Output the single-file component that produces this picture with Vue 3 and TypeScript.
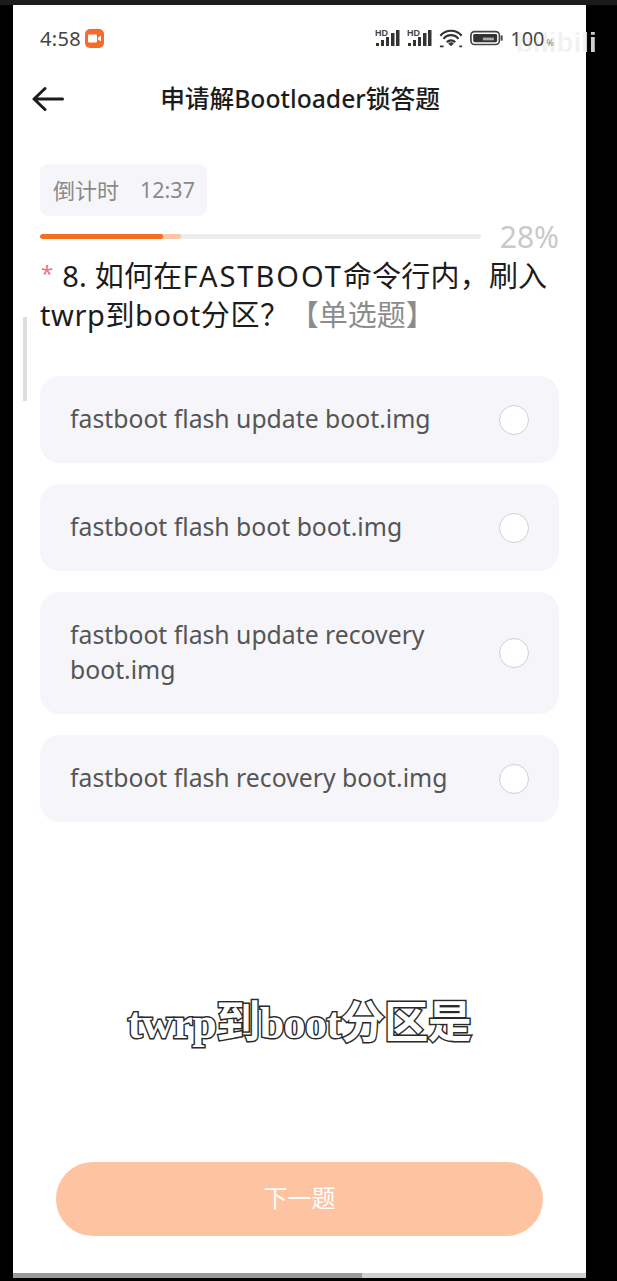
<script setup lang="ts">
const options: string[] = [
  'fastboot flash update boot.img',
  'fastboot flash boot boot.img',
  'fastboot flash update recovery boot.img',
  'fastboot flash recovery boot.img',
]
</script>

<template>
  <div class="screen">
    <div class="topline"></div>
    <div class="phone">
      <div class="status">
        <div class="status-left">
          <span class="time">4:58</span>
          <span class="rec">
            <svg width="15" height="11" viewBox="0 0 15 11"><rect x="1" y="1.5" width="9" height="8" rx="1" fill="#fff"/><path d="M11 4.5 14 2.8v5.4L11 6.5z" fill="#fff"/></svg>
          </span>
        </div>
        <div class="status-right">
          <svg class="sig" width="28" height="20" viewBox="0 0 28 20">
            <text x="0" y="7.5" class="hd">HD</text>
            <rect x="1" y="15" width="3" height="3" fill="#333"/><rect x="6" y="12" width="3" height="6" fill="#333"/><rect x="11" y="9" width="3" height="9" fill="#333"/><rect x="16" y="5" width="3.5" height="13" fill="#333"/><rect x="21" y="2" width="3.5" height="16" fill="#333"/>
          </svg>
          <svg class="sig" width="28" height="20" viewBox="0 0 28 20">
            <text x="0" y="7.5" class="hd">HD</text>
            <rect x="1" y="15" width="3" height="3" fill="#333"/><rect x="6" y="12" width="3" height="6" fill="#333"/><rect x="11" y="9" width="3" height="9" fill="#333"/><rect x="16" y="5" width="3.5" height="13" fill="#333"/><rect x="21" y="2" width="3.5" height="16" fill="#333"/>
          </svg>
          <svg class="wifi" width="24" height="20" viewBox="0 0 26 20" fill="none" stroke="#333" stroke-width="2.4">
            <path d="M1.5 7.5a15 15 0 0 1 23 0"/><path d="M5 11a10 10 0 0 1 16 0"/><path d="M8.500 14.500a6 6 0 0 1 9 0"/>
            <path d="M13 19l-3-3a4 4 0 0 1 6 0z" fill="#333" stroke="none"/>
            <path d="M1 19h4M22 19h3" stroke-width="2"/>
          </svg>
          <svg class="batt" width="34" height="17" viewBox="0 0 37 18">
            <rect x="1" y="1.500" width="31" height="14" rx="4" fill="none" stroke="#444" stroke-width="1.800"/>
            <rect x="3.500" y="4" width="26" height="9" rx="1.500" fill="#333"/>
            <rect x="14" y="8" width="12" height="3" fill="#aaa"/>
            <rect x="33.500" y="5.500" width="2" height="6" rx="1" fill="#444"/>
          </svg>
          <span class="pct">100<small>%</small></span>
        </div>
      </div>

      <header class="nav">
        <svg class="back" width="32" height="26" viewBox="0 0 32 26" fill="none" stroke="#1c1c1c" stroke-width="3" stroke-linecap="round" stroke-linejoin="round">
          <path d="M30.500 13H2M13 2.500 2 13l11 10.500"/>
        </svg>
        <h1 class="title">申请解Bootloader锁答题</h1>
      </header>

      <main class="body">
        <div class="timer"><span>倒计时</span><span class="clock">12:37</span></div>
        <div class="progress-row">
          <div class="track">
            <div class="buffer"></div>
            <div class="fill"></div>
          </div>
          <span class="percent">28%</span>
        </div>
        <p class="question"><span class="line1"><span class="star">*</span>8. 如何在<span class="latin">FASTBOOT</span>命令行内，刷入</span><br>twrp到boot分区？<span class="kind">【单选题】</span></p>
        <div class="options">
          <div v-for="opt in options" :key="opt" class="option">
            <span class="opt-text">{{ opt }}</span>
            <span class="radio"></span>
          </div>
        </div>
        <button class="next" type="button">下一题</button>
      </main>

      <div class="hbar"><div class="hthumb"></div></div>
      <div class="vbar"></div>
      <div class="caption">twrp到boot分区是</div>
    </div>
    <div class="mark">bilibili</div>
  </div>
</template>

<style>
html, body { margin: 0; background: #000; }
</style>

<style scoped>
.screen {
  position: relative;
  width: 617px;
  height: 1281px;
  background: #000;
  overflow: hidden;
  font-family: "Noto Sans", "Noto Sans CJK SC", sans-serif;
}
.topline { height: 5px; background: #1b1c1c; }
.phone {
  position: relative;
  box-sizing: border-box;
  display: flex;
  flex-direction: column;
  width: 573px;
  height: 1273px;
  margin-left: 13px;
  background: #fff;
  overflow: hidden;
}
.status {
  display: flex;
  justify-content: space-between;
  align-items: center;
  height: 30px;
  margin-top: 18px;
  padding: 0 32px 0 27px;
  flex: none;
}
.status-left { display: flex; align-items: center; gap: 4px; }
.time { font-size: 20px; color: #444; letter-spacing: .3px; }
.rec {
  display: flex;
  align-items: center;
  justify-content: center;
  width: 19px;
  height: 19px;
  border-radius: 5px;
  background: #f8692a;
}
.status-right { display: flex; align-items: center; gap: 4px; }
.hd { font-size: 9px; font-weight: 700; fill: #444; font-family: "Liberation Sans", sans-serif; }
.batt { margin-left: 3px; }
.pct { font-size: 20px; color: #444; margin-left: 2px; }
.pct small { font-size: 9px; color: #777; margin-left: 2px; }
.nav {
  position: relative;
  display: flex;
  align-items: center;
  justify-content: center;
  height: 48px;
  margin-top: 20px;
  flex: none;
}
.back { position: absolute; left: 19px; top: 13px; }
.title {
  margin: 0 0 0 1px;
  font-size: 24.700px;
  font-weight: 500;
  color: #1c1c1c;
}
.body {
  flex: 1;
  display: flex;
  flex-direction: column;
  padding: 43px 27px 42px 27px;
  min-height: 0;
}
.timer {
  display: flex;
  align-items: center;
  gap: 21px;
  flex: none;
  box-sizing: border-box;
  width: 167px;
  height: 52px;
  padding: 0 0 2px 13px;
  border-radius: 8px;
  background: #f6f6fa;
  font-size: 22px;
  color: #8a8a8a;
}
.clock { font-size: 21.500px; }
.progress-row {
  display: flex;
  align-items: center;
  flex: none;
  height: 42px;
}
.track {
  position: relative;
  width: 441px;
  height: 5px;
  margin-top: -1px;
  border-radius: 3px;
  background: #ececec;
  overflow: hidden;
}
.fill { position: absolute; left: 0; top: 0; bottom: 0; width: 123px; background: #f36e1f; border-radius: 3px; }
.buffer { position: absolute; left: 0; top: 0; bottom: 0; width: 141px; background: #fcc6a8; border-radius: 3px; }
.percent {
  margin-left: auto;
  font-size: 30px;
  color: #c9c9c9;
  line-height: 1;
  margin-top: -1px;
}
.question {
  margin: -2px 0 0;
  font-size: 29px;
  line-height: 39px;
  letter-spacing: .6px;
  color: #1c1c1c;
  white-space: nowrap;
}
.line1 { letter-spacing: .2px; }
.latin { letter-spacing: 2px; }
.star {
  color: #f0708c;
  font-size: 22px;
  line-height: 0;
  vertical-align: 6px;
  margin: 0 9px 0 1px;
}
.kind { color: #8c8c8c; letter-spacing: 0; }
.options {
  display: flex;
  flex-direction: column;
  gap: 21px;
  margin-top: 42px;
}
.option {
  display: flex;
  align-items: center;
  justify-content: space-between;
  box-sizing: border-box;
  padding: 26px 30px;
  border-radius: 20px;
  background: #f6f6fa;
}
.opt-text {
  max-width: 385px;
  font-size: 24.750px;
  line-height: 35px;
  color: #555;
  position: relative;
  top: -1px;
}
.radio {
  flex: none;
  box-sizing: border-box;
  width: 30px;
  height: 30px;
  border-radius: 50%;
  border: 1px solid #cfcfd4;
  background: #fff;
}
.next {
  flex: none;
  margin: auto 16px 0;
  height: 74px;
  padding: 0 0 6px;
  border: 0;
  border-radius: 37px;
  background: #fec3a0;
  color: #fff;
  font: inherit;
  font-size: 24px;
}
.hbar {
  position: absolute;
  left: 0;
  right: 0;
  bottom: 0;
  height: 5px;
  background: #cfcfcf;
}
.hthumb { width: 349px; height: 100%; background: #9a9a9a; }
.vbar {
  position: absolute;
  left: 10px;
  top: 312px;
  width: 4px;
  height: 84px;
  background: #dedede;
}
.caption {
  position: absolute;
  left: 0;
  top: 993px;
  width: 573px;
  text-align: center;
  font-family: "Liberation Serif", "Noto Sans CJK SC", serif;
  font-weight: 700;
  font-size: 44px;
  line-height: 52px;
  color: #fff;
  -webkit-text-stroke: 3px #2a2a2a;
  paint-order: stroke fill;
  letter-spacing: -.5px;
}
.mark {
  position: absolute;
  left: 516px;
  top: 27px;
  font-family: "Liberation Sans", sans-serif;
  font-weight: 700;
  font-size: 28px;
  color: transparent;
  background: linear-gradient(90deg, rgba(190, 190, 190, .2) 70px, #cfcfcf 70px);
  -webkit-background-clip: text;
  background-clip: text;
}
</style>
